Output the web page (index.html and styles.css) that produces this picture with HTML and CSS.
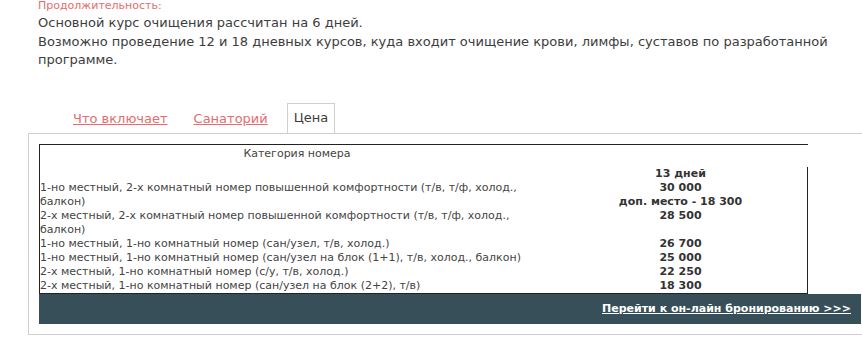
FILE: index.html
```html
<!DOCTYPE html>
<html lang="ru">
<head>
<meta charset="utf-8">
<title>Цена</title>
<link rel="stylesheet" href="styles.css">
</head>
<body>
<div class="intro">
  <div class="label">Продолжительность:</div>
  <p class="text">Основной курс очищения рассчитан на 6 дней.<br>Возможно проведение 12 и 18 дневных курсов, куда входит очищение крови, лимфы, суставов по разработанной<br>программе.</p>
</div>
<div class="tabs">
  <nav class="tab-nav">
    <a class="tab" href="#">Что включает</a>
    <a class="tab" href="#">Санаторий</a>
    <span class="tab active">Цена</span>
  </nav>
  <div class="panel">
    <table class="prices">
      <thead>
        <tr><th class="cat">Категория номера</th><th class="days"><div class="days-cell">13 дней</div></th></tr>
      </thead>
      <tbody>
        <tr><td>1-но местный, 2-х комнатный номер повышенной комфортности (т/в, т/ф, холод.,<br>балкон)</td><td>30 000<br>доп. место - 18 300</td></tr>
        <tr><td>2-х местный, 2-х комнатный номер повышенной комфортности (т/в, т/ф, холод.,<br>балкон)</td><td>28 500</td></tr>
        <tr><td>1-но местный, 1-но комнатный номер (сан/узел, т/в, холод.)</td><td>26 700</td></tr>
        <tr><td>1-но местный, 1-но комнатный номер (сан/узел на блок (1+1), т/в, холод., балкон)</td><td>25 000</td></tr>
        <tr><td>2-х местный, 1-но комнатный номер (с/у, т/в, холод.)</td><td>22 250</td></tr>
        <tr><td>2-х местный, 1-но комнатный номер (сан/узел на блок (2+2), т/в)</td><td>18 300</td></tr>
      </tbody>
    </table>
    <div class="bar"><a href="#" class="book">Перейти к он-лайн бронированию &gt;&gt;&gt;</a></div>
  </div>
</div>
</body>
</html>
```

FILE: styles.css
```css
html, body {
  margin: 0;
  padding: 0;
  background: #fff;
  overflow: hidden;
}
body {
  font-family: "DejaVu Sans", Verdana, sans-serif;
  color: #3d3d3d;
  width: 862px;
  height: 347px;
}
.intro {
  padding-left: 38px;
}
.label {
  color: #e56d6d;
  font-size: 11px;
  line-height: 14px;
  margin-top: -1px;
}
.text {
  margin: 0;
  font-size: 13px;
  line-height: 18.5px;
  padding-top: 1px;
}
.tabs {
  margin-top: 35px;
}
.tab-nav {
  display: flex;
  align-items: flex-end;
  gap: 12px;
  padding-left: 66px;
  height: 28px;
  position: relative;
  z-index: 1;
}
.tab {
  font-size: 13px;
  line-height: 28px;
  padding: 0 6px;
  color: #e56d6d;
  text-decoration: underline;
  border: 1px solid transparent;
  border-bottom: 0;
}
.tab.active {
  color: #3d3d3d;
  text-decoration: none;
  border-color: #cfcfcf;
  background: #fff;
  height: 29px;
}
.panel {
  margin-left: 28px;
  width: 822px;
  border: 1px solid #cfcfcf;
  padding: 10px;
}
.prices {
  border-collapse: separate;
  border-spacing: 0;
  width: 769px;
  border-top: 1px solid #222;
  border-left: 1px solid #222;
  border-bottom: 1px solid #222;
  font-size: 11px;
  line-height: 14px;
  color: #444;
}
.prices th {
  font-weight: normal;
  padding: 0;
}
.prices .cat {
  width: 514px;
  text-align: center;
  vertical-align: top;
  padding-top: 2px;
  height: 34px;
}
.prices .days {
  vertical-align: bottom;
  font-weight: bold;
  color: #333;
}
.days-cell {
  border-right: 1px solid #222;
  text-align: center;
}
.prices td {
  padding: 0;
  vertical-align: top;
  text-align: left;
  white-space: nowrap;
}
.prices td:last-child {
  text-align: center;
  font-weight: bold;
  color: #333;
  border-right: 1px solid #222;
}
.bar {
  background: #374f58;
  height: 30px;
  display: flex;
  align-items: center;
  justify-content: flex-end;
  padding-right: 10px;
}
.book {
  color: #fff;
  font-weight: bold;
  font-size: 11px;
  text-decoration: underline;
}
```
